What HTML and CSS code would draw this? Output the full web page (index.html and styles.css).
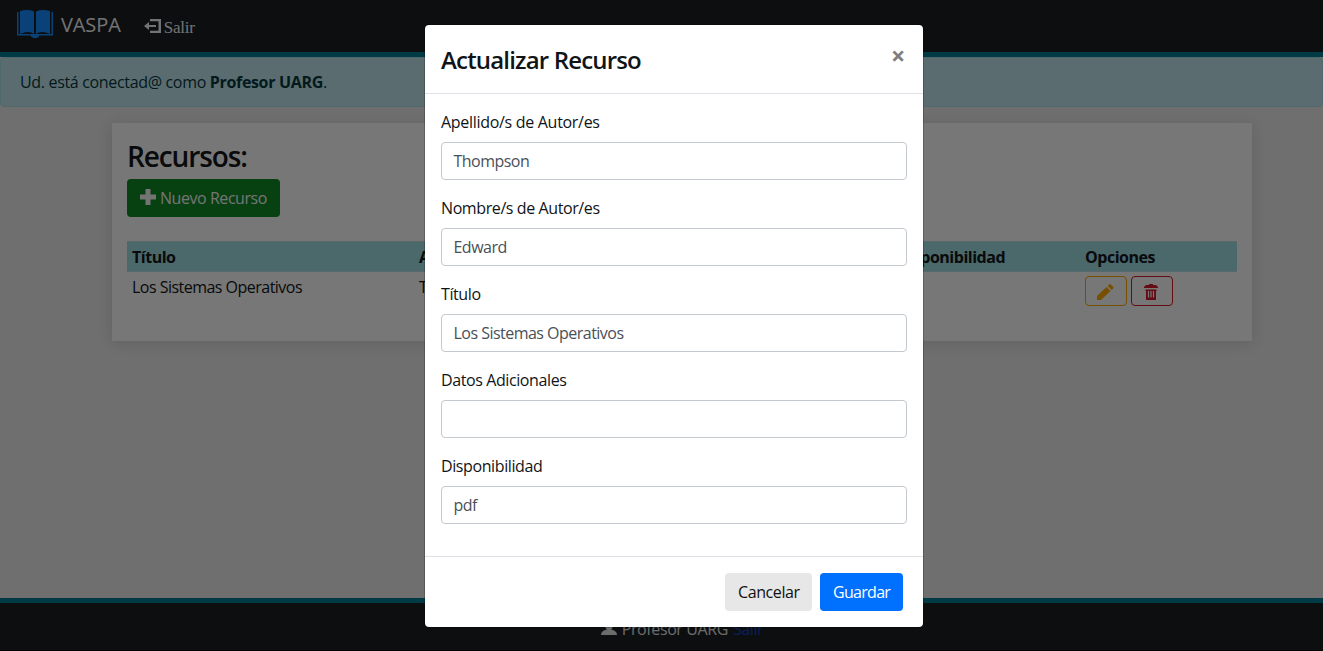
FILE: index.html
```html
<!DOCTYPE html>
<html lang="es">
<head>
<meta charset="utf-8">
<title>VASPA - Recursos</title>
<link rel="stylesheet" href="styles.css">
</head>
<body>
<div class="page">
  <nav class="navbar">
    <a class="brand">
      <svg class="book" viewBox="0 0 36 28" width="36" height="28"><path d="M0 2h1.500v22H0zM34.500 2h1.500v22h-1.500zM0 24h36v1.600H0zM14 25h8v2h-1.500v1h-5v-1H14z"/><path d="M3 1Q11-1 17 1.500V24Q12 20 3 24zM33 1Q25-1 19 1.500V24Q24 20 33 24z"/></svg>
      <span class="brand-name">VASPA</span>
    </a>
    <a class="logout">
      <svg viewBox="0 0 17 14" width="17" height="14"><path d="M6 0h11v14H6v-2.200h8.500V2.200H6zM5 3v2.900h7v2.200H5V11L0 7z"/></svg>
      <span class="logout-text">Salir</span>
    </a>
  </nav>
  <div class="alert"><span class="alert-text">Ud. está conectad@ como</span> <strong class="alert-user">Profesor UARG</strong>.</div>
  <main class="card">
    <h1 class="card-title">Recursos:</h1>
    <button class="btn new-btn"><svg viewBox="0 0 16 16" width="16" height="16"><path d="M5.500 0h5v5.500H16v5h-5.500V16h-5v-5.500H0v-5h5.500z"/></svg><span class="new-text">Nuevo Recurso</span></button>
    <div class="table">
      <div class="row head"><b>Título</b><b>Autor/es</b><b></b><b>Disponibilidad</b><b>Opciones</b></div>
      <div class="row"><span class="name">Los Sistemas Operativos</span><span>Thompson</span><span></span><span></span>
        <div class="options">
          <button class="icon-btn edit"><svg viewBox="0 0 17 16" width="17" height="16"><path d="M0 16v-4L9.500 3l4 4L4 16zM10.700 2l1.500-1.500q.8-.8 1.600 0l2.400 2.400q.8.800 0 1.600L14.700 6z"/></svg></button>
          <button class="icon-btn trash"><svg viewBox="0 0 14 16" width="14" height="16"><path d="M5 0h4v1h3l2 2v1H0V3l2-2h3zM1.500 5.500h11V7H12v9H2V7h-.500z"/><path class="slots" d="M4.500 7v6.500M7 7v6.500M9.500 7v6.500"/></svg></button>
        </div>
      </div>
    </div>
  </main>
  <footer class="footer">
    <svg viewBox="0 0 16 14" width="16" height="14"><path d="M8 0q4 0 4 4 0 3-2 4.500 6 1 6 5.500H0q0-4.500 6-5.500-2-1.500-2-4.500 0-4 4-4z"/></svg>
    <span class="footer-user">Profesor UARG</span><a class="footer-link">Salir</a>
  </footer>
</div>
<div class="backdrop">
  <form class="modal">
    <header class="modal-header"><h2 class="modal-title">Actualizar Recurso</h2><span class="close">×</span></header>
    <div class="modal-body">
      <div class="field"><label class="wide">Apellido/s de Autor/es</label><div class="input">Thompson</div></div>
      <div class="field"><label>Nombre/s de Autor/es</label><div class="input">Edward</div></div>
      <div class="field"><label>Título</label><div class="input">Los Sistemas Operativos</div></div>
      <div class="field"><label>Datos Adicionales</label><div class="input"></div></div>
      <div class="field"><label>Disponibilidad</label><div class="input">pdf</div></div>
    </div>
    <div class="modal-footer"><button type="button" class="btn cancel">Cancelar</button><button type="button" class="btn save">Guardar</button></div>
  </form>
</div>
</body>
</html>
```

FILE: styles.css
```css
* { box-sizing: border-box; }
body { margin: 0; height: 651px; overflow: hidden; background: #000; font: 16px/24px "Open Sans", "Noto Sans", sans-serif; letter-spacing: -0.4px; color: #111417; }
button { font: inherit; letter-spacing: inherit; }
svg { display: block; fill: currentColor; flex: none; }
.page { height: 650px; display: flex; flex-direction: column; background: #dedede; }
.navbar { height: 57px; flex: none; display: flex; padding: 0 17px; background: #181c20; border-bottom: 5px solid #007489; color: #e6e6e6; }
.brand { display: flex; gap: 8px; padding-top: 10px; }
.book { color: #1583f0; }
.brand-name { font-size: 20px; line-height: 30px; letter-spacing: -.1px; }
.logout { display: flex; gap: 3px; margin-left: 23px; padding-top: 19px; font: 17px/18px "Liberation Serif", serif; letter-spacing: -.25px; }
.alert { height: 50px; flex: none; padding: 12px 19px; border: 1px solid #9fd0d8; border-radius: 4px; background: #b4d9df; color: #07343b; letter-spacing: -.33px; }
.card { width: 1140px; height: 218px; flex: none; margin: 16px 0 0 112px; padding: 16px 15px; background: #eee; box-shadow: 0 2px 14px rgba(0,0,0,.12); }
.card-title { margin: 0 0 6px; font-size: 28px; line-height: 34px; font-weight: 600; letter-spacing: -1.1px; }
.btn { height: 38px; border: 0; border-radius: 4px; padding: 0 13px; }
.new-btn { display: flex; align-items: center; gap: 4px; width: 153px; background: #0e8022; color: #e9e9e9; white-space: nowrap; letter-spacing: -.45px; }
.new-btn svg { margin-top: -3px; }
.table { margin-top: 24px; }
.row { display: grid; grid-template-columns: 287px 278px 200px 188px 157px; }
.row > * { padding: 4px 5px; line-height: 24px; }
.row > span { padding-top: 3px; }
.row .name { letter-spacing: -.52px; }
.head { height: 31px; background: #96d0d6; border-top: 1px solid #b2d0d4; border-bottom: 1px solid #b2d0d4; letter-spacing: -.48px; }
.head > * { padding-top: 3px; }
.row .options { display: flex; gap: 4px; }
.icon-btn { width: 42px; height: 30px; display: grid; place-items: center; padding: 2px 0 0; background: none; border: 1px solid; border-radius: 4px; }
.edit { color: #eda100; }
.edit svg { margin-left: -2px; }
.trash { color: #c91728; }
.trash svg { margin-left: -2px; }
.slots { fill: none; stroke: #eee; stroke-width: 1.2; }
.footer { height: 52px; margin-top: auto; flex: none; display: flex; justify-content: center; align-items: flex-start; gap: 5px; padding: 14px 0 0 41px; border-top: 5px solid #007489; background: #181c20; color: #d8d8d8; }
.footer svg { margin-top: 4px; }
.footer-link { color: #163fb5; }
.backdrop { position: absolute; inset: 0; padding: 24px 0 0 424px; background: rgba(0,0,0,.5); }
.modal { width: 500px; height: 604px; display: flex; flex-direction: column; background: #fff; background-clip: padding-box; border: 1px solid rgba(0,0,0,.2); border-radius: 5px; }
.modal-header { height: 69px; display: flex; justify-content: space-between; padding: 17px 18px 0 16px; border-bottom: 1px solid #dee2e6; }
.modal-title { margin: 0; font-size: 24px; line-height: 36px; font-weight: 600; letter-spacing: -.83px; }
.close { font-size: 25px; line-height: 26px; font-weight: 700; color: #7f7f7f; }
.modal-body { height: 462px; padding: 16px; }
.field { height: 86px; }
.field label { display: block; margin-bottom: 8px; }
.field .wide { letter-spacing: -.3px; }
.input { height: 38px; padding: 6px 11.500px; border: 1px solid #c4c9cf; border-radius: 4px; color: #495057; letter-spacing: -.52px; }
.modal-footer { flex: 1; display: flex; justify-content: flex-end; gap: 8px; padding: 16px 20px; border-top: 1px solid #dee2e6; }
.cancel { width: 87px; background: #e7e7e7; color: #111; }
.save { width: 83px; background: #0070ff; color: #fff; letter-spacing: -.7px; }
```
